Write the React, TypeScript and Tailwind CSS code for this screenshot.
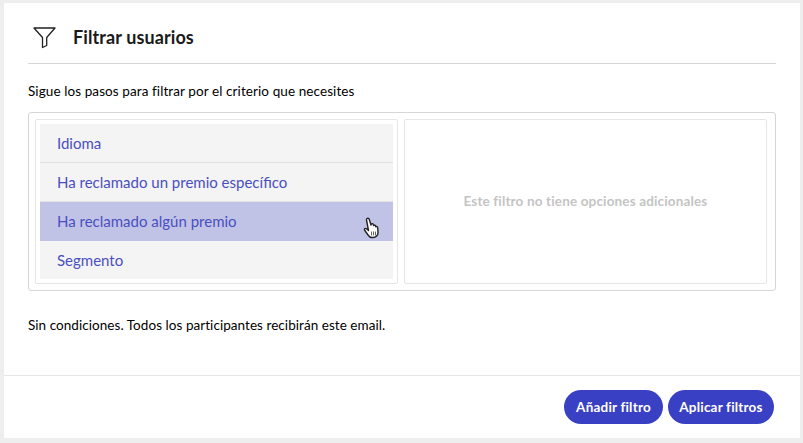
const font = { fontFamily: 'Lato, sans-serif' };

function Row({ label, active, last }: { label: string; active?: boolean; last?: boolean }) {
  return (
    <div
      className={`relative flex items-center pl-[17px] text-[15px] text-[#4a4fc0] ${
        active ? "bg-[#c1c3e6]" : "bg-[#f4f4f4]"
      } ${last ? "h-[38px]" : "h-[39px]"} ${last || active ? "" : "border-b border-[#e2e2e2]"}`}
    >
      {label}
      {active && (
        <svg className="absolute left-[323px] top-[15px]" width="18" height="22" viewBox="0 0 18 22">
          <path
            d="M4 1.500c1-.6 2 0 2.300 1L8 8l.3-1c.8-.8 1.800-.3 2 .5l.3 1c.7-.8 1.800-.4 2 .5l.2.7c.8-.5 1.800 0 1.900 1l.3 5c0 2.500-2 4.800-4.800 4.800H9c-1.800 0-3-1-4-2.500L1.500 13c-.5-1 .8-2.200 2-1.200L5.500 13.500 3.500 3c-.1-.6 0-1.200.5-1.500z"
            fill="#fff"
            stroke="#222"
            strokeWidth="1.400"
            strokeLinejoin="round"
          />
          <path d="M8.500 14.500v4M10.500 14.500v4M12.500 14.500v4" stroke="#666" strokeWidth="1" />
        </svg>
      )}
    </div>
  );
}

export default function App() {
  return (
    <div
      className="flex h-[443px] w-[803px] flex-col border-t-[3px] border-r-[3px] border-b-[5px] border-l-[4px] border-[#eeeeee] bg-white text-black"
      style={font}
    >
      <div className="flex flex-1 flex-col px-[24px]">
        <div className="flex h-[61px] items-center border-b border-[#d6d6d6] pt-[8px] pl-[4px]">
          <svg width="24" height="24" viewBox="0 0 24 24" fill="none" stroke="#222" strokeWidth="1.300" strokeLinejoin="round">
            <path d="M2 3h21l-8.300 9.500v8l-4.200 2v-10z" />
          </svg>
          <span className="ml-[17px] text-[18px] font-bold leading-none tracking-[0.1px] text-[#1a1a1a]">Filtrar usuarios</span>
        </div>
        <p className="mt-[18px] text-[13.5px] leading-[18px] tracking-[0.09px]">Sigue los pasos para filtrar por el criterio que necesites</p>
        <div className="mt-[12px] flex h-[179px] gap-[6px] rounded-[3px] border border-[#d6d6d6] p-[6px]">
          <div className="w-[363px] rounded-[2px] border border-[#e6e6e6] p-[4px]">
            <Row label="Idioma" />
            <Row label="Ha reclamado un premio específico" />
            <Row label="Ha reclamado algún premio" active />
            <Row label="Segmento" last />
          </div>
          <div className="mr-[2px] flex flex-1 items-center justify-center rounded-[2px] border border-[#e6e6e6] pb-[1px] text-[13.5px] font-bold tracking-[0.15px] text-[#c4c4c4]">
            Este filtro no tiene opciones adicionales
          </div>
        </div>
        <p className="mt-[25px] text-[13.5px] leading-[18px] tracking-[0.05px]">Sin condiciones. Todos los participantes recibirán este email.</p>
      </div>
      <div className="flex h-[63px] items-center justify-end gap-[5px] border-t border-[#e6e6e6] pr-[26px]">
        <button className="h-[34px] w-[99px] rounded-full bg-[#3a40c4] text-[13.5px] font-bold tracking-[0.2px] text-white">Añadir filtro</button>
        <button className="h-[34px] w-[106px] rounded-full bg-[#3a40c4] text-[13.5px] font-bold tracking-[0.2px] text-white">Aplicar filtros</button>
      </div>
    </div>
  );
}
